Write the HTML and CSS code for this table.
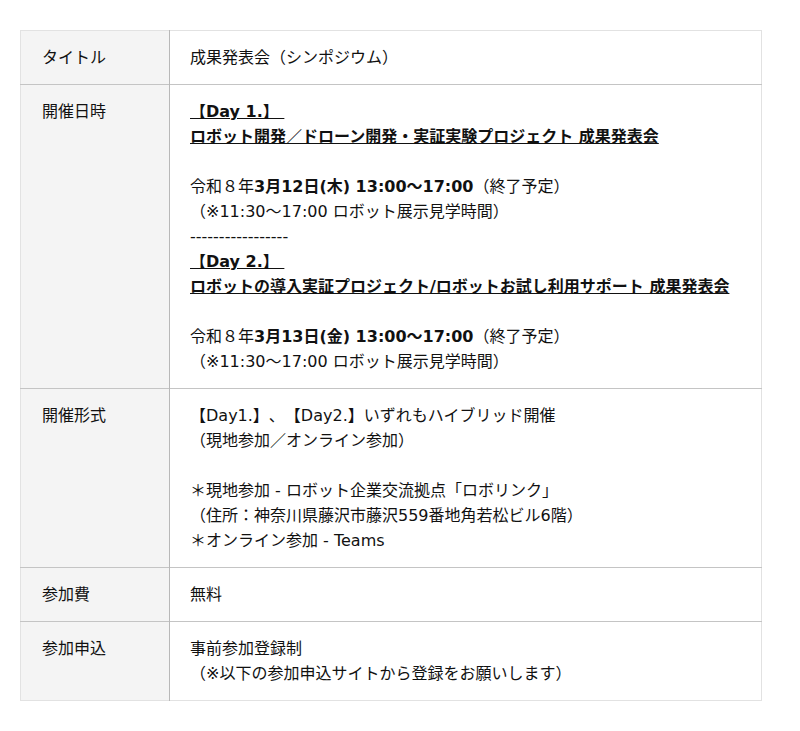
FILE: index.html
```html
<!DOCTYPE html>
<html lang="ja">
<head>
<meta charset="utf-8">
<link rel="stylesheet" href="styles.css">
</head>
<body>
<table class="info">
  <tr>
    <th>タイトル</th>
    <td>成果発表会（シンポジウム）</td>
  </tr>
  <tr>
    <th>開催日時</th>
    <td><b class="u">【Day 1.】&nbsp;</b><br>
      <b class="u">ロボット開発／ドローン開発・実証実験プロジェクト 成果発表会</b><br>
      <br>
      令和８年<b>3月12日(木) 13:00〜17:00</b>（終了予定）<br>
      （※11:30〜17:00 ロボット展示見学時間）<br>
      -----------------<br>
      <b class="u">【Day 2.】&nbsp;</b><br>
      <b class="u">ロボットの導入実証プロジェクト/ロボットお試し利用サポート 成果発表会</b><br>
      <br>
      令和８年<b>3月13日(金) 13:00〜17:00</b>（終了予定）<br>
      （※11:30〜17:00 ロボット展示見学時間）</td>
  </tr>
  <tr>
    <th>開催形式</th>
    <td>【Day1.】、【Day2.】いずれもハイブリッド開催<br>
      （現地参加／オンライン参加）<br>
      <br>
      ＊現地参加 - ロボット企業交流拠点「ロボリンク」<br>
      （住所：神奈川県藤沢市藤沢559番地角若松ビル6階）<br>
      ＊オンライン参加 - Teams</td>
  </tr>
  <tr>
    <th>参加費</th>
    <td>無料</td>
  </tr>
  <tr>
    <th>参加申込</th>
    <td>事前参加登録制<br>
      （※以下の参加申込サイトから登録をお願いします）</td>
  </tr>
</table>
</body>
</html>
```
FILE: styles.css
```css
html, body {
  margin: 0;
  padding: 0;
  background: #fff;
}
body {
  padding: 30px 20px;
  font-family: "DejaVu Sans", "Noto Sans CJK JP", sans-serif;
  font-size: 16px;
  line-height: 25px;
  color: #111;
  text-spacing-trim: space-all;
}
.info {
  width: 742px;
  border-collapse: collapse;
  border: 1px solid #e2e2e2;
}
.info tr + tr th,
.info tr + tr td {
  border-top: 1px solid #c4c4c4;
}
.info th {
  width: 107px;
  background: #f4f4f4;
  font-weight: normal;
  text-align: left;
  vertical-align: top;
  padding: 14px 20px 14px 21px;
  border-right: 1px solid #b8b8b8;
}
.info td {
  vertical-align: top;
  padding: 14px 20px 14px 20px;
}
.u {
  text-decoration: underline;
}
b {
  font-weight: bold;
}
```
